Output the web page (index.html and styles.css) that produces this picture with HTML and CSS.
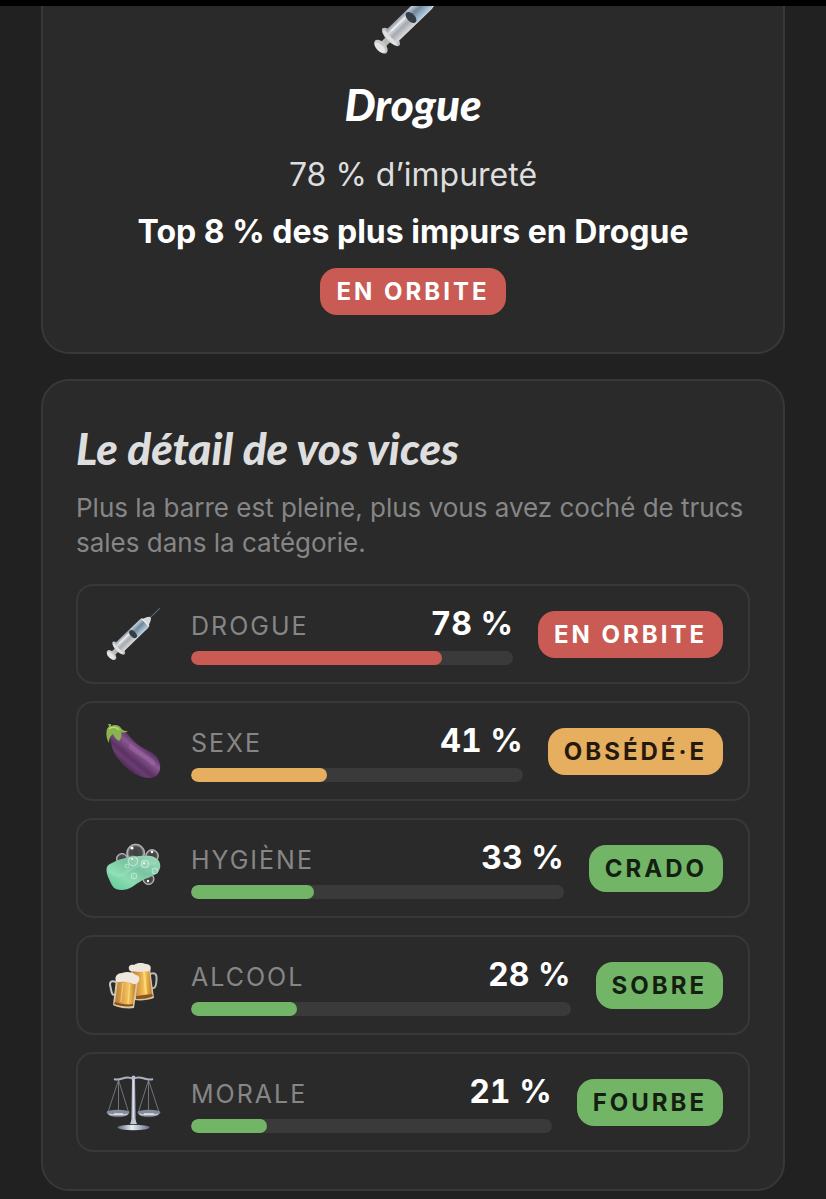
FILE: index.html
```html
<!DOCTYPE html>
<html lang="fr">
<head>
    <meta charset="utf-8">
    <meta name="viewport" content="width=device-width, initial-scale=1">
    <title>Le détail de vos vices</title>
    <link rel="stylesheet" href="styles.css">
</head>
<body>

    <svg class="defs" aria-hidden="true">
        <defs>
            <linearGradient id="barrel" x1="0" y1="0" x2="0" y2="1">
                <stop offset="0" stop-color="#8f979f"/>
                <stop offset=".25" stop-color="#d9dde0"/>
                <stop offset=".55" stop-color="#a6a9b0"/>
                <stop offset="1" stop-color="#dcdcdc"/>
            </linearGradient>
            <linearGradient id="liquid" x1="0" y1="0" x2="0" y2="1">
                <stop offset="0" stop-color="#bfcfdd"/>
                <stop offset=".4" stop-color="#71879b"/>
                <stop offset="1" stop-color="#b5cfe2"/>
            </linearGradient>
            <linearGradient id="purple" x1=".25" y1=".75" x2=".65" y2=".3">
                <stop offset="0" stop-color="#4a2850"/>
                <stop offset=".25" stop-color="#6b3d73"/>
                <stop offset=".4" stop-color="#5b3163"/>
                <stop offset=".75" stop-color="#8a5792"/>
                <stop offset="1" stop-color="#5a2f62"/>
            </linearGradient>
            <linearGradient id="soap" x1="0" y1="1" x2="1" y2="0">
                <stop offset="0" stop-color="#5cc795"/>
                <stop offset=".35" stop-color="#8bdcb1"/>
                <stop offset=".6" stop-color="#7bc4a2"/>
                <stop offset="1" stop-color="#9edcbc"/>
            </linearGradient>
            <radialGradient id="bubble">
                <stop offset="0" stop-color="#fff" stop-opacity=".1"/>
                <stop offset=".7" stop-color="#fff" stop-opacity=".15"/>
                <stop offset="1" stop-color="#fff" stop-opacity=".75"/>
            </radialGradient>
            <linearGradient id="beer" x1="0" y1="0" x2="1" y2="0">
                <stop offset="0" stop-color="#b67b34"/>
                <stop offset=".3" stop-color="#d89a45"/>
                <stop offset=".65" stop-color="#f6c75c"/>
                <stop offset="1" stop-color="#bd7a25"/>
            </linearGradient>
            <linearGradient id="steel" x1="0" y1="0" x2="1" y2="0">
                <stop offset="0" stop-color="#5e6878"/>
                <stop offset=".45" stop-color="#e8edf5"/>
                <stop offset="1" stop-color="#657083"/>
            </linearGradient>
            <linearGradient id="pan" x1="0" y1="0" x2="0" y2="1">
                <stop offset="0" stop-color="#5d6472"/>
                <stop offset=".5" stop-color="#c7cdd8"/>
                <stop offset="1" stop-color="#454c5c"/>
            </linearGradient>
        </defs>

        <symbol id="syringe" viewBox="0 0 63 63">
            <g transform="translate(8.5 52) rotate(-44)">
                <path d="M51 0H67" stroke="#65696d" stroke-width="1"/>
                <path d="M46-5L52-2.5 54-1V1L52 2.5 46 5z" fill="#d6dade"/>
                <rect x="0" y="-2.4" width="11" height="4.8" fill="#b9b9b9"/>
                <ellipse cx="0" cy="0" rx="3.4" ry="6" fill="#c9c9c9"/>
                <ellipse cx="-1" cy="0" rx="2.2" ry="4.8" fill="#e5e5e5"/>
                <ellipse cx="10" cy="0" rx="3.4" ry="8.6" fill="#bdbfc2"/>
                <ellipse cx="9" cy="0" rx="2" ry="7" fill="#e0e0e0"/>
                <rect x="10" y="-6" width="37" height="12" rx="2" fill="url(#barrel)"/>
                <rect x="30" y="-5.5" width="17" height="11" rx="2" fill="url(#liquid)"/>
                <ellipse cx="30" cy="0" rx="2.8" ry="4.8" fill="#343c46"/>
                <path d="M13-3H27" stroke="#f0f0f0" stroke-width="1"/>
                <path d="M47-5.5V5.5" stroke="#eef2f5" stroke-width="1.2"/>
            </g>
        </symbol>

        <symbol id="eggplant" viewBox="0 0 63 63">
            <path d="M7 13C7 24 10 33 17 41C26 52 37 58 47 58C54 58 58 52 57 45C56 36 49 32 42 29C32 24 28 18 22 11z" fill="url(#purple)"/>
            <path d="M28 27C35 34 44 36 50 43" fill="none" stroke="#b07eb6" stroke-width="5" stroke-linecap="round" opacity=".3"/>
            <path d="M5 4L8 4 8 6C12 4 16 5 18 8C20 11 22 11 25 11C22 13 20 13 18 12C19 16 18 19 16 21C13 19 11 17 10 14C7 16 6 19 6 23C3 18 3 13 4 9C5 7 6 7 6 6z" fill="#8ab34f"/>
            <path d="M6 9C9 6 14 7 16 10" fill="none" stroke="#b8d67c" stroke-width="1.5"/>
        </symbol>

        <symbol id="soapbar" viewBox="0 0 63 63">
            <g fill="url(#bubble)" stroke="#c9cccb" stroke-width=".7">
                <circle cx="32.7" cy="16" r="9"/>
                <circle cx="49" cy="19" r="6.4"/>
                <circle cx="19" cy="22" r="5.6"/>
                <circle cx="45.5" cy="42" r="5.6"/>
            </g>
            <path d="M3.500 32C3.500 29 6 27 9 26C14 23 20 21 28 20C38 19 46 18 51 20C56 22 58 27 57 31C56 36 50 39 45 41C38 43 34 47 29 50C24 53 18 54 13 52C9 50 8 46 6 42C4 38 3.500 35 3.500 32z" fill="url(#soap)"/>
            <path d="M5 33C12 39 18 40 22 36C29 30 37 27 53 26" fill="none" stroke="#b4edcf" stroke-width="3" opacity=".25"/>
            <g fill="url(#bubble)" stroke="#d7f5e6" stroke-width=".5" opacity=".8">
                <circle cx="30" cy="24" r="5"/>
                <circle cx="42" cy="27" r="4"/>
                <circle cx="31" cy="39" r="3"/>
                <circle cx="24" cy="29" r="2"/>
                <circle cx="52" cy="34" r="3"/>
            </g>
            <g fill="#fff">
                <circle cx="29" cy="11" r="1.6"/>
                <circle cx="49" cy="15" r="1.3"/>
                <circle cx="29" cy="22" r="1"/>
                <circle cx="41" cy="26" r="1"/>
                <circle cx="45" cy="44" r="1.2"/>
            </g>
        </symbol>

        <symbol id="beers" viewBox="0 0 63 63">
            <path d="M47 20C52 18 54 20 53.5 26C53 33 52 35 48 34" fill="none" stroke="#b9b9b7" stroke-width="2"/>
            <path d="M28 15L47 14 51 44C46 46 37 47 32 46z" fill="#d5c4a4"/>
            <path d="M29 16L46 15 49 41C44 43 38 44 33 43z" fill="url(#beer)"/>
            <path d="M33 42L49 40 50 42C45 45 38 45 33 45z" fill="#8c541d"/>
            <path d="M41 18L43 40" stroke="#ffda74" stroke-width="2"/>
            <path d="M27 17C24 13 27 10 31 11C35 8 40 9 43 10C47 10 49 13 47 17C43 18 32 18 27 17z" fill="#eee5db"/>
            <path d="M13 28C8 26 6 28 7.5 33C9 40 9 42 13 40" fill="none" stroke="#c7c7c5" stroke-width="2"/>
            <path d="M13 25L35 27 31 54C25 55 15 54 10 51z" fill="#d9c7a7"/>
            <path d="M15 26L33 28 30 51C24 52 17 51 12 49z" fill="url(#beer)"/>
            <path d="M12 48C18 50 24 51 30 50V52C24 53 16 52 11 50z" fill="#83501f"/>
            <path d="M20 29L18 48M27 30L25 49" stroke="#fce4a2" stroke-width="1.2" opacity=".6"/>
            <path d="M13 27C11 22 15 19 19 19C24 17 30 18 33 21C38 22 37 28 33 30C30 31 27 28 24 28C20 27 16 29 13 27z" fill="#f0e8df"/>
        </symbol>

        <symbol id="scales" viewBox="0 0 63 63">
            <path d="M15.5 9L5 41M15.5 9V39M15.5 9L25.5 41M45.5 9L35.5 41M45.5 9V39M45.5 9L56 41" fill="none" stroke="#81868e" stroke-width=".8"/>
            <path d="M11 8C18 11 22 3 30 8C38 3 43 11 50 8" fill="none" stroke="#aab2c1" stroke-width="2"/>
            <path d="M29 6H32L33 53H28z" fill="url(#steel)"/>
            <circle cx="30.5" cy="6.5" r="2" fill="#b3bdce"/>
            <path d="M3.5 41H26.5C25 48 6 48 3.5 41zM34.5 41H57.5C55 48 36 48 34.5 41z" fill="url(#pan)"/>
            <ellipse cx="15" cy="41" rx="11.5" ry="2.2" fill="#858d9b"/>
            <ellipse cx="46" cy="41" rx="11.5" ry="2.2" fill="#858d9b"/>
            <path d="M11 43H20M41 43H51" stroke="#e2e5eb" stroke-width="1.5"/>
            <path d="M27 53L29 48H32L34 53z" fill="#c1c8d4"/>
            <ellipse cx="30.5" cy="56.5" rx="16" ry="2.7" fill="url(#steel)"/>
        </symbol>
    </svg>

    <main class="page">

        <section class="card card-top">
            <div class="hero-icon">
                <svg role="img" aria-label="Seringue"><use href="#syringe"/></svg>
            </div>
            <h2>Drogue</h2>
            <p class="score">78 % d’impureté</p>
            <p class="rank">Top 8 % des plus impurs en Drogue</p>
            <span class="badge red">En orbite</span>
        </section>

        <section class="card">
            <h2 class="muted">Le détail de vos vices</h2>
            <p class="intro">Plus la barre est pleine, plus vous avez coché de trucs sales dans la catégorie.</p>

            <ul class="vices">
                <li class="vice">
                    <svg class="icon" aria-hidden="true"><use href="#syringe"/></svg>
                    <div class="detail">
                        <div class="line"><span class="name">Drogue</span><strong>78 %</strong></div>
                        <div class="bar"><div class="fill red" style="width: 78%"></div></div>
                    </div>
                    <span class="badge red">En orbite</span>
                </li>
                <li class="vice">
                    <svg class="icon" aria-hidden="true"><use href="#eggplant"/></svg>
                    <div class="detail">
                        <div class="line"><span class="name">Sexe</span><strong>41 %</strong></div>
                        <div class="bar"><div class="fill orange" style="width: 41%"></div></div>
                    </div>
                    <span class="badge orange">Obsédé·e</span>
                </li>
                <li class="vice">
                    <svg class="icon" aria-hidden="true"><use href="#soapbar"/></svg>
                    <div class="detail">
                        <div class="line"><span class="name">Hygiène</span><strong>33 %</strong></div>
                        <div class="bar"><div class="fill green" style="width: 33%"></div></div>
                    </div>
                    <span class="badge green">Crado</span>
                </li>
                <li class="vice">
                    <svg class="icon" aria-hidden="true"><use href="#beers"/></svg>
                    <div class="detail">
                        <div class="line"><span class="name">Alcool</span><strong>28 %</strong></div>
                        <div class="bar"><div class="fill green" style="width: 28%"></div></div>
                    </div>
                    <span class="badge green">Sobre</span>
                </li>
                <li class="vice">
                    <svg class="icon" aria-hidden="true"><use href="#scales"/></svg>
                    <div class="detail">
                        <div class="line"><span class="name">Morale</span><strong>21 %</strong></div>
                        <div class="bar"><div class="fill green" style="width: 21%"></div></div>
                    </div>
                    <span class="badge green">Fourbe</span>
                </li>
            </ul>
        </section>

    </main>

</body>
</html>
```
FILE: styles.css
```css
* {
    box-sizing: border-box;
}
body {
    margin: 0;
    border-top: 6px solid #000;
    background-color: #212121;
    color: #fff;
    font-family: Inter, "Liberation Sans", sans-serif;
    font-size: 32px;
}
h2, p, ul {
    margin: 0;
    padding: 0;
}
.defs {
    display: block;
    width: 0;
    height: 0;
}
.page {
    display: flex;
    flex-direction: column;
    gap: 25px;
    padding: 0 41px 7px;
}
.card {
    padding: 37px 33px;
    border: 2px solid #383838;
    border-radius: 28px;
    background-color: #2a2a2a;
}
/* Le haut de la première carte sort de l'écran */
.card-top {
    display: flex;
    flex-direction: column;
    align-items: center;
    padding-top: 0;
    border-top: 0;
    border-radius: 0 0 28px 28px;
    text-align: center;
}
.hero-icon {
    display: flex;
    align-items: flex-end;
    height: 56px;
    margin-bottom: 12px;
    overflow: hidden;
}
.hero-icon svg {
    flex: none;
    width: 88px;
    height: 88px;
}
h2 {
    margin-bottom: 12px;
    font-family: Lato, "Open Sans", sans-serif;
    font-size: 44px;
    font-style: italic;
    font-weight: 900;
    line-height: 60px;
}
.muted {
    color: #dedede;
}
.score, .rank {
    line-height: 57px;
}
.score {
    color: #dedede;
}
.rank {
    margin-bottom: 8px;
    font-weight: 700;
}
.intro {
    margin-bottom: 24px;
    color: #868686;
    font-size: 26px;
    line-height: 35px;
}
.vices {
    display: flex;
    flex-direction: column;
    gap: 17px;
    list-style: none;
}
.vice {
    display: flex;
    align-items: center;
    gap: 25px;
    min-height: 100px;
    padding: 16px 25px;
    border: 2px solid #383838;
    border-radius: 17px;
}
.icon {
    flex: none;
    width: 63px;
    height: 63px;
}
.detail {
    flex: 1;
    min-width: 0;
}
.line {
    display: flex;
    align-items: baseline;
    justify-content: space-between;
    margin-bottom: 6px;
    line-height: 42px;
}
.line strong {
    font-weight: 700;
    font-variant-numeric: tabular-nums;
    white-space: nowrap;
}
.name {
    color: #868686;
    font-size: 25px;
    letter-spacing: 2px;
    line-height: 30px;
    text-transform: uppercase;
}
.bar {
    height: 14px;
    border-radius: 7px;
    background-color: #3a3a3a;
    overflow: hidden;
}
.fill {
    height: 100%;
    border-radius: 7px;
}
.badge {
    padding: 0 16px;
    border-radius: 17px;
    font-size: 24px;
    font-weight: 700;
    letter-spacing: 3px;
    line-height: 47px;
    text-transform: uppercase;
    white-space: nowrap;
}
.red {
    background-color: #c95b54;
}
.orange {
    background-color: #e6af60;
}
.green {
    background-color: #72b567;
}
.badge.orange {
    color: #24190b;
}
.badge.green {
    color: #141f12;
}
```
